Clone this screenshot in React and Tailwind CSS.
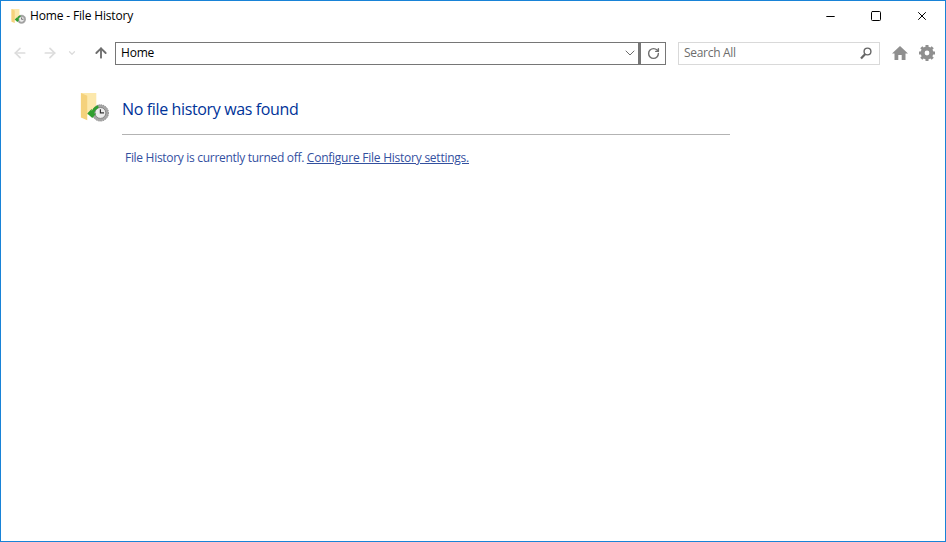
import { ArrowLeft, ArrowRight, ArrowUp, ChevronDown, RotateCw, Minus, Square, X } from "lucide-react";

function FolderClock({ size }) {
  return (
    <svg width={size} height={size} viewBox="0 0 32 32">
      <path d="M1 0 H18 V24 H1 Z" fill="#fce8ac" />
      <path d="M1 0 L8 3 V30 L1 27 Z" fill="#f5d27c" />
      <circle cx="22.5" cy="22" r="9" fill="#a6a6a6" stroke="#858585" strokeDasharray="1.5 1" />
      <circle cx="22.5" cy="22" r="6" fill="#ececec" stroke="#6f6f6f" strokeWidth="0.8" />
      <path d="M22.5 18 V22 H26.5" fill="none" stroke="#333333" strokeWidth="1.3" />
      <path d="M8 22.5 L13 17.5 V20 C14 17 16.5 14.5 20 13.5 L20.5 16.5 C18 17.5 16.5 19.5 15.5 22.5 H18 L13.5 27.5 Z" fill="#2f9f2f" />
    </svg>
  );
}

function HomeIcon() {
  return (
    <svg width="16" height="16" viewBox="0 0 16 16" fill="#8f8f8f">
      <path d="M8 1 L16 8.5 H13.5 V15 H9.7 V10 H6.3 V15 H2.5 V8.5 H0 Z" />
    </svg>
  );
}

function GearIcon() {
  return (
    <svg width="16" height="16" viewBox="0 0 16 16">
      <circle cx="8" cy="8" r="4.4" fill="none" stroke="#8f8f8f" strokeWidth="4" />
      <g stroke="#8f8f8f" strokeWidth="3">
        <path d="M8 0 V3" />
        <path d="M8 13 V16" />
        <path d="M0 8 H3" />
        <path d="M13 8 H16" />
        <path d="M2.3 2.3 L4.4 4.4" />
        <path d="M11.6 11.6 L13.7 13.7" />
        <path d="M13.7 2.3 L11.6 4.4" />
        <path d="M4.4 11.6 L2.3 13.7" />
      </g>
    </svg>
  );
}

function SearchGlyph() {
  return (
    <svg width="12" height="13" viewBox="0 0 12 13" fill="none" stroke="#666666">
      <circle cx="7.5" cy="4.5" r="3.4" strokeWidth="1.4" />
      <path d="M5 7.2 L1 11.5" strokeWidth="2.2" />
    </svg>
  );
}

function TitleBar() {
  return (
    <div className="flex items-center h-[30px] pl-[10px]">
      <FolderClock size={15} />
      <span className="ml-[4px] text-[12px] tracking-[-0.16px] text-black">Home - File History</span>
      <div className="ml-auto flex h-full">
        <button className="w-[46px] flex items-center justify-center">
          <Minus size={13} strokeWidth={1} absoluteStrokeWidth className="text-black" />
        </button>
        <button className="w-[46px] flex items-center justify-center">
          <Square size={12} strokeWidth={1} absoluteStrokeWidth className="text-black" />
        </button>
        <button className="w-[46px] flex items-center justify-center">
          <X size={14} strokeWidth={1} absoluteStrokeWidth className="text-black" />
        </button>
      </div>
    </div>
  );
}

function Toolbar() {
  return (
    <div className="flex items-center h-[22px] mt-[11px] pl-[11px]">
      <ArrowLeft size={16} strokeWidth={2.6} className="text-[#dcdcdc]" />
      <ArrowRight size={16} strokeWidth={2.6} className="text-[#dcdcdc] ml-[14px]" />
      <ChevronDown size={10} strokeWidth={3} className="text-[#dcdcdc] ml-[9px]" />
      <ArrowUp size={16} strokeWidth={2.8} className="text-[#6e6e6e] ml-[16px]" />
      {/* address bar */}
      <div className="flex items-center ml-[6px] w-[524px] h-[23px] border border-[#767676] pl-[5px]">
        <span className="text-[12px] tracking-[-0.2px] text-black">Home</span>
        <ChevronDown size={16} strokeWidth={1.3} className="ml-auto text-[#555555]" />
      </div>
      <div className="flex items-center justify-center w-[27px] h-[23px] border border-l-2 border-[#767676]">
        <RotateCw size={13} strokeWidth={2.6} className="text-[#6e6e6e]" />
      </div>
      {/* search */}
      <div className="flex items-center ml-[12px] w-[202px] h-[23px] border border-[#d9d9d9] pl-[5px] pr-[7px]">
        <span className="text-[12px] tracking-[-0.3px] text-[#6d6d6d]">Search All</span>
        <div className="ml-auto"><SearchGlyph /></div>
      </div>
      <div className="ml-[12px]"><HomeIcon /></div>
      <div className="ml-[11px]"><GearIcon /></div>
    </div>
  );
}

export default function App() {
  return (
    <div
      className="w-[946px] h-[542px] bg-white border border-[#1883d7] overflow-hidden"
      style={{ fontFamily: '"Open Sans", "Noto Sans", sans-serif' }}
    >
      <TitleBar />
      <Toolbar />
      <div className="flex pl-[79px] pt-[28px]">
        <div className="mt-[1px]"><FolderClock size={29} /></div>
        <div className="ml-[13px] w-[608px]">
          <h1 className="text-[16px] tracking-[-0.36px] leading-[22px] pt-[6px] pb-[14px] text-[#003399] border-b border-[#b3b3b3]">
            No file history was found
          </h1>
          <p className="mt-[14px] pl-[3px] text-[12px] tracking-[-0.3px] text-[#33509f]">
            File History is currently turned off.{" "}
            <a className="underline tracking-[-0.24px] text-[#33509f]">Configure File History settings.</a>
          </p>
        </div>
      </div>
    </div>
  );
}
